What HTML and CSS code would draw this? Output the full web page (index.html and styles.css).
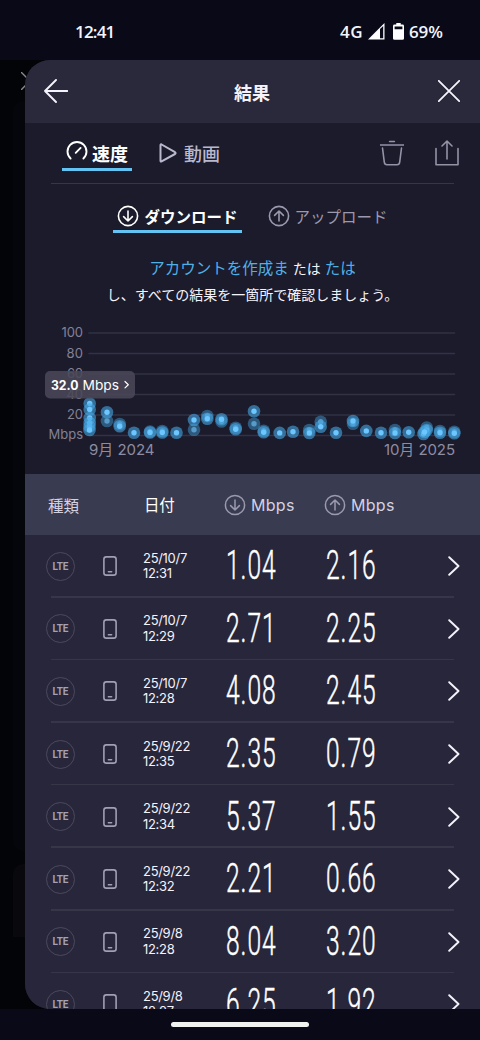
FILE: index.html
```html
<!DOCTYPE html>
<html lang="ja">
<head>
    <meta charset="utf-8">
    <title>結果</title>
    <link rel="stylesheet" href="styles.css">
</head>
<body>
    <svg class="defs">
        <symbol id="down" viewBox="0 0 22 22"><circle cx="11" cy="11" r="9.6"/><path d="M11 6v10M6.6 11.6 11 16l4.4-4.4"/></symbol>
        <symbol id="up" viewBox="0 0 22 22"><circle cx="11" cy="11" r="9.6"/><path d="M11 16V6M6.6 10.4 11 6l4.4 4.4"/></symbol>
        <symbol id="phone" viewBox="0 0 14 20"><rect x=".9" y=".9" width="12.2" height="18.2" rx="2.4"/><path d="M5.4 15.7h3.2"/></symbol>
        <symbol id="next" viewBox="0 0 12 20"><path d="M1.2 1.2 10.5 10 1.2 18.8"/></symbol>
        <g id="dot"><circle class="halo" r="6.3"/><circle class="core" r="2.7"/></g>
    </svg>

    <div class="status">
        <span class="time">12:41</span>
        <span class="net">4G</span>
        <svg class="signal" viewBox="0 0 17 17"><path fill="#fff" fill-rule="evenodd" d="M0 16.5 16.5 0v16.5zM12 6v9.2h3.2V3z"/></svg>
        <svg class="battery" viewBox="0 0 11 17"><path fill="#fff" fill-rule="evenodd" d="M3.3 0h4.4v1.6h1.8Q11 1.6 11 3v12.5q0 1.3-1.5 1.3h-8Q0 16.8 0 15.5V3q0-1.4 1.5-1.4h1.8zM1.6 3.4v2.9h7.8V3.4z"/></svg>
        <span class="percent">69%</span>
    </div>

    <div class="stage">
        <div class="behind">
            <svg class="behind-x" viewBox="0 0 18 18"><path d="M0 0 18 18M0 18 18 0"/></svg>
            <div class="behind-card big"></div>
            <div class="behind-card"></div>
        </div>
        <div class="panel">
            <div class="header">
                <svg class="back" viewBox="0 0 24 24"><path d="M23.5 12H1M12 1 1 12l11 11"/></svg>
                <h1>結果</h1>
                <svg class="close" viewBox="0 0 22 22"><path d="M.8.8l20.4 20.4M21.2.8.8 21.2"/></svg>
            </div>

            <div class="tabs">
                <div class="tab active">
                    <svg class="gauge" viewBox="0 0 22 20"><path d="M4.600 17.500A9.500 9.500 0 1 1 17.400 17.500M9.700 11.800 14.600 6.900"/></svg>
                    <span>速度</span>
                </div>
                <div class="tab">
                    <svg class="play" viewBox="0 0 18 20"><path d="M1.500 2.200v15.600q0 1.200 1.100.6L16 11q1.200-.9 0-1.800L2.600 1.500q-1.100-.5-1.100.7z"/></svg>
                    <span>動画</span>
                </div>
                <svg class="trash" viewBox="0 0 24 26"><path d="M0 5h24M9.600 1.500h4.800M2.500 8l1.800 14.200q.3 2.600 2.700 2.600h10q2.400 0 2.700-2.600L21.500 8"/></svg>
                <svg class="share" viewBox="0 0 24 26"><path d="M1 8.500v16.300h22V8.500M12 19V1.500M7 6l5-5 5 5"/></svg>
            </div>

            <div class="subtabs">
                <div class="subtab active"><svg class="arrow"><use href="#down"/></svg><span>ダウンロード</span></div>
                <div class="subtab"><svg class="arrow"><use href="#up"/></svg><span>アップロード</span></div>
            </div>

            <p class="notice"><a>アカウントを作成ま</a> たは <a>たは</a><br>し、すべての結果を一箇所で確認しましょう。</p>

            <svg class="chart" viewBox="25 314 455 160">
                <path class="grid" d="M89 333h365.500M89 353.500h365.500M89 374h365.500M89 394.500h365.500M89 415h365.500M89 435.500h365.500"/>
                <g class="axis">
                    <text x="61.500" y="337" textLength="21.500">100</text>
                    <text x="66.500" y="357.500" textLength="16.500">80</text>
                    <text x="67" y="378" textLength="16">60</text>
                    <text x="66.500" y="398.500" textLength="16.500">40</text>
                    <text x="67" y="419" textLength="16">20</text>
                    <text x="48.500" y="439" textLength="34.500">Mbps</text>
                </g>
                <g class="months">
                    <text x="89" y="455" textLength="65.500">9月 2024</text>
                    <text x="384" y="455" textLength="71">10月 2025</text>
                </g>
                <g>
                    <use href="#dot" x="89.700" y="403.500"/><use href="#dot" x="89.700" y="409.500"/><use href="#dot" x="89.700" y="418"/><use href="#dot" x="89.700" y="423"/><use href="#dot" x="89.500" y="426.500"/><use href="#dot" x="89.500" y="430"/>
                    <use href="#dot" x="107" y="421" class="faint"/><use href="#dot" x="107" y="412.300"/>
                    <use href="#dot" x="119.700" y="424" class="faint"/><use href="#dot" x="119.700" y="426.300"/>
                    <use href="#dot" x="134" y="432.700"/>
                    <use href="#dot" x="150" y="431.500" class="faint"/><use href="#dot" x="150" y="432.500"/>
                    <use href="#dot" x="162.300" y="431" class="faint"/><use href="#dot" x="162.300" y="432.500"/>
                    <use href="#dot" x="176.500" y="432.700"/>
                    <use href="#dot" x="194" y="429.700" class="faint"/><use href="#dot" x="194" y="420"/>
                    <use href="#dot" x="207.300" y="416" class="faint"/><use href="#dot" x="207.300" y="418.700"/>
                    <use href="#dot" x="221.500" y="421.500" class="faint"/><use href="#dot" x="221.500" y="419.300"/>
                    <use href="#dot" x="235.700" y="427.800" class="faint"/><use href="#dot" x="235.700" y="429.300"/>
                    <use href="#dot" x="254" y="423.700" class="faint"/><use href="#dot" x="254" y="411.300"/>
                    <use href="#dot" x="263.700" y="430.700" class="faint"/><use href="#dot" x="263.700" y="432.200"/>
                    <use href="#dot" x="279.700" y="432.900"/>
                    <use href="#dot" x="293" y="431.700"/>
                    <use href="#dot" x="309.300" y="430" class="faint"/><use href="#dot" x="309.300" y="433"/>
                    <use href="#dot" x="320.700" y="421.700" class="faint"/><use href="#dot" x="320.700" y="426.700"/>
                    <use href="#dot" x="336" y="432.700"/>
                    <use href="#dot" x="353" y="423.700" class="faint"/><use href="#dot" x="353" y="421"/>
                    <use href="#dot" x="366.300" y="430.900"/>
                    <use href="#dot" x="381" y="432.700"/>
                    <use href="#dot" x="395" y="430" class="faint"/><use href="#dot" x="395" y="433"/>
                    <use href="#dot" x="408.700" y="432.300"/>
                    <use href="#dot" x="426.700" y="427.500" class="faint"/><use href="#dot" x="426.700" y="430"/><use href="#dot" x="423.500" y="434"/><use href="#dot" x="424.500" y="432"/>
                    <use href="#dot" x="440" y="431" class="faint"/><use href="#dot" x="440" y="432.700"/>
                    <use href="#dot" x="454.300" y="431.700" class="faint"/><use href="#dot" x="454.300" y="433.200"/>
                </g>
                <g class="tip">
                    <rect x="45" y="371" width="90" height="27.500" rx="5"/>
                    <text x="51" y="389.500" class="bold" textLength="27.500" lengthAdjust="spacingAndGlyphs">32.0</text>
                    <text x="82.500" y="389.500" textLength="36.500" lengthAdjust="spacingAndGlyphs">Mbps</text>
                    <path d="M125 381.500l3.300 3.200-3.300 3.200"/>
                </g>
            </svg>

            <div class="row thead">
                <span class="kind">種類</span>
                <span class="date">日付</span>
                <span class="speed"><svg class="arrow"><use href="#down"/></svg>Mbps</span>
                <span class="speed"><svg class="arrow"><use href="#up"/></svg>Mbps</span>
            </div>

            <div class="list">
                <div class="row">
                    <span class="lte">LTE</span><svg class="phone"><use href="#phone"/></svg>
                    <span class="date">25/10/7<br>12:31</span>
                    <span class="speed"><b>1.04</b></span><span class="speed"><b>2.16</b></span>
                    <svg class="next"><use href="#next"/></svg>
                </div>
                <div class="row">
                    <span class="lte">LTE</span><svg class="phone"><use href="#phone"/></svg>
                    <span class="date">25/10/7<br>12:29</span>
                    <span class="speed"><b>2.71</b></span><span class="speed"><b>2.25</b></span>
                    <svg class="next"><use href="#next"/></svg>
                </div>
                <div class="row">
                    <span class="lte">LTE</span><svg class="phone"><use href="#phone"/></svg>
                    <span class="date">25/10/7<br>12:28</span>
                    <span class="speed"><b>4.08</b></span><span class="speed"><b>2.45</b></span>
                    <svg class="next"><use href="#next"/></svg>
                </div>
                <div class="row">
                    <span class="lte">LTE</span><svg class="phone"><use href="#phone"/></svg>
                    <span class="date">25/9/22<br>12:35</span>
                    <span class="speed"><b>2.35</b></span><span class="speed"><b>0.79</b></span>
                    <svg class="next"><use href="#next"/></svg>
                </div>
                <div class="row">
                    <span class="lte">LTE</span><svg class="phone"><use href="#phone"/></svg>
                    <span class="date">25/9/22<br>12:34</span>
                    <span class="speed"><b>5.37</b></span><span class="speed"><b>1.55</b></span>
                    <svg class="next"><use href="#next"/></svg>
                </div>
                <div class="row">
                    <span class="lte">LTE</span><svg class="phone"><use href="#phone"/></svg>
                    <span class="date">25/9/22<br>12:32</span>
                    <span class="speed"><b>2.21</b></span><span class="speed"><b>0.66</b></span>
                    <svg class="next"><use href="#next"/></svg>
                </div>
                <div class="row">
                    <span class="lte">LTE</span><svg class="phone"><use href="#phone"/></svg>
                    <span class="date">25/9/8<br>12:28</span>
                    <span class="speed"><b>8.04</b></span><span class="speed"><b>3.20</b></span>
                    <svg class="next"><use href="#next"/></svg>
                </div>
                <div class="row">
                    <span class="lte">LTE</span><svg class="phone"><use href="#phone"/></svg>
                    <span class="date">25/9/8<br>12:27</span>
                    <span class="speed"><b>6.25</b></span><span class="speed"><b>1.92</b></span>
                    <svg class="next"><use href="#next"/></svg>
                </div>
            </div>
        </div>
    </div>

    <div class="navbar"><div class="pill"></div></div>
</body>
</html>
```
FILE: styles.css
```css
* {
    box-sizing: border-box;
}
body {
    margin: 0;
    width: 480px;
    height: 1040px;
    overflow: hidden;
    background-color: #090917;
    color: #f4f3fb;
    font-family: Inter, "Noto Sans CJK JP", sans-serif;
}
svg {
    display: block;
    flex: none;
    fill: none;
    stroke: currentColor;
    stroke-linecap: round;
    stroke-linejoin: round;
}
.defs {
    position: absolute;
    width: 0;
    height: 0;
}

/* status bar */
.status {
    height: 60px;
    display: flex;
    align-items: center;
    padding: 3px 37px 0 75px;
    font-family: "Open Sans", sans-serif;
    font-size: 17px;
    font-weight: 600;
}
.status svg {
    stroke: none;
}
.time {
    flex: 1;
    letter-spacing: -0.8px;
}
.net {
    letter-spacing: 0.4px;
}
.signal {
    width: 17px;
    height: 17px;
    margin-left: 5px;
}
.battery {
    width: 11px;
    height: 17px;
    margin: 0 5px 0 8px;
}

/* page under the panel */
.stage {
    display: flex;
    height: 949px;
    background-color: #030408;
}
.behind {
    width: 25px;
    padding-left: 13px;
}
.behind-x {
    width: 18px;
    height: 18px;
    margin: 12px 0 11px 8px;
    stroke-width: 1.4;
    color: #8a8a8e;
}
.behind-card {
    width: 40px;
    height: 73px;
    margin-top: 13px;
    border-radius: 10px 0 0 0;
    background-color: #08080d;
}
.behind-card.big {
    height: 750px;
    margin-top: 0;
    border-radius: 10px 0 0 10px;
    background-color: #05060b;
}
.panel {
    position: relative;
    width: 455px;
    flex: none;
    overflow: hidden;
    border-radius: 25px 0 0 25px;
    background-color: #1b1b2c;
}
.header {
    display: flex;
    align-items: center;
    justify-content: space-between;
    height: 63px;
    padding: 0 20px 2px 19px;
    background-color: #2a283b;
}
.header h1 {
    margin: 2px 2px 0 0;
    font-size: 18px;
    font-weight: 700;
}
.back {
    width: 24px;
    height: 24px;
    stroke-width: 1.9;
}
.close {
    width: 22px;
    height: 22px;
    stroke-width: 1.8;
}

.tabs {
    display: flex;
    height: 61px;
    margin: 0 26px;
    border-bottom: 1.5px solid #373648;
}
.tab {
    display: flex;
    align-items: center;
    height: 48px;
    margin-left: 23px;
    padding: 12px 4px 0 4px;
    font-size: 18px;
    font-weight: 500;
    color: #bab8cc;
}
.tab.active {
    margin-left: 11px;
    padding-top: 14px;
    border-bottom: 3px solid #63c4f3;
    color: #fff;
    font-weight: 700;
}
.gauge {
    width: 22px;
    height: 20px;
    margin: -3px 4px 0 0;
    stroke-width: 1.9;
}
.play {
    width: 18px;
    height: 20px;
    margin-right: 7px;
    stroke-width: 2;
}
.trash, .share {
    width: 24px;
    height: 26px;
    margin-top: 17px;
    stroke-width: 1.6;
    color: #9492a6;
}
.trash {
    margin-left: auto;
}
.share {
    margin: 17px -5px 0 31px;
}

.subtabs {
    display: flex;
    justify-content: center;
    gap: 22px;
    height: 49px;
    padding-top: 15px;
}
.subtab {
    display: flex;
    align-items: center;
    height: 34px;
    padding: 0 4px;
    font-size: 15.5px;
    color: #9b99ad;
}
.subtab.active {
    border-bottom: 3px solid #63c4f3;
    font-weight: 600;
    color: #fff;
    padding-top: 2px;
}
.arrow {
    width: 22px;
    height: 22px;
    margin-right: 5px;
    stroke-width: 1.6;
}

.notice {
    height: 81px;
    margin: 0;
    padding-top: 23px;
    text-align: center;
    font-size: 14px;
    line-height: 26px;
    white-space: nowrap;
}
.notice a {
    color: #4fb0e6;
    font-size: 15.5px;
}

/* chart */
.chart {
    width: 455px;
    height: 160px;
}
.chart text {
    stroke: none;
    fill: currentColor;
}
.grid {
    stroke: #323244;
    stroke-width: 1.6;
}
.axis {
    color: #838195;
    font-size: 13px;
}
.months {
    color: #8e8ca1;
    font-size: 15px;
}
.halo {
    stroke: none;
    fill: #46a7e2;
    fill-opacity: 0.6;
}
.core {
    stroke: none;
    fill: #6cc6ff;
}
.faint {
    opacity: 0.75;
}
.tip {
    color: #fff;
    font-size: 13px;
}
.tip rect {
    stroke: none;
    fill: #4a4858;
    fill-opacity: 0.88;
}
.tip .bold {
    font-weight: 700;
}
.tip path {
    stroke-width: 1.2;
}

/* results table */
.row {
    display: flex;
    align-items: center;
    position: relative;
    height: 62.6px;
    padding-left: 21px;
}
.list {
    background-color: #28263a;
}
.list .row::after {
    content: "";
    position: absolute;
    left: 26px;
    right: 26px;
    bottom: 0;
    height: 1.5px;
    background-color: #373548;
}
.thead {
    height: 61px;
    padding-left: 23px;
    background-color: #393b50;
    font-size: 15.5px;
    color: #d3d1e2;
}
.thead .kind {
    width: 96px;
}
.thead .date {
    width: 80px;
    padding-top: 2px;
    font-size: 15.5px;
    color: #fff;
}
.thead .speed {
    display: flex;
    align-items: center;
    font-size: 16px;
    letter-spacing: 0.3px;
}
.thead .arrow {
    color: #9b99ad;
    stroke-width: 1.5;
}
.lte {
    width: 29px;
    height: 29px;
    border: 1.5px solid #4b495d;
    border-radius: 50%;
    font: 700 10px/27px Roboto, sans-serif;
    text-align: center;
    letter-spacing: -0.1px;
    color: #a3a1b5;
}
.phone {
    width: 14px;
    height: 20px;
    margin: 0 26px 0 28px;
    stroke-width: 1.6;
    color: #a19fb3;
}
.date {
    width: 82px;
    font-size: 13px;
    line-height: 15.5px;
    letter-spacing: -0.3px;
}
.speed {
    width: 100px;
}
.speed b {
    display: inline-block;
    margin-left: 1px;
    font: 300 40px/44px Roboto, sans-serif;
    -webkit-text-stroke: 0.5px #fff;
    letter-spacing: 1.5px;
    transform: scaleX(0.615);
    transform-origin: left;
    color: #fff;
}
.next {
    width: 12px;
    height: 20px;
    margin-left: 23px;
    stroke-width: 1.9;
}

.navbar {
    display: flex;
    justify-content: center;
    height: 31px;
    padding-top: 13px;
}
.pill {
    width: 138px;
    height: 5px;
    border-radius: 3px;
    background-color: #f0f2f0;
}
```
